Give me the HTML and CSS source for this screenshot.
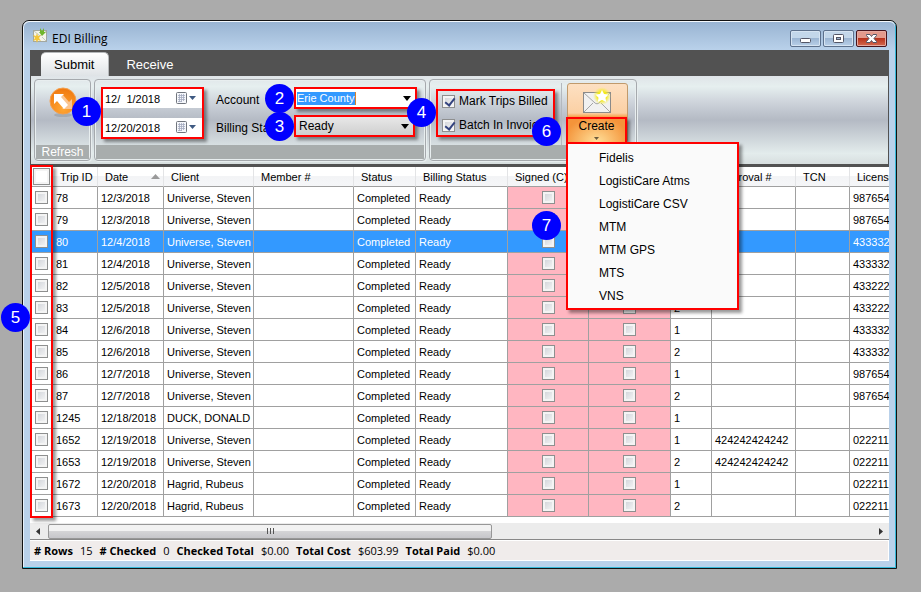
FILE: index.html
```html
<!DOCTYPE html>
<html lang="en">
<head>
    <meta charset="UTF-8">
    <title>EDI Billing</title>
    <link rel="stylesheet" href="styles.css">
</head>
<body>
    <div class="window">
        <div class="titlebar">
            <svg class="app-icon" width="16" height="16" viewBox="0 0 16 16">
                <rect x="1.500" y="2.500" width="13" height="11" fill="#f4f4ea" stroke="#a3a79f"/>
                <path d="M2 3l6 5 6-5M14 13l-4-4" fill="none" stroke="#c5c8c0"/>
                <path d="M8 0l2 3 2-3v4h2l-4 4-3-4h1z" fill="#6fb52c"/>
                <path d="M5 5l1 3 3-1-2 3 2 3-3-1-1 3-1-3-3 1 2-3-2-3 3 1z" fill="#f3c63a"/>
            </svg>
            <span class="title">EDI Billing</span>
            <div class="win-btns">
                <button type="button" aria-label="Minimize">
                    <svg width="29" height="15"><rect x="9.500" y="7.500" width="10" height="4" rx="1" fill="#fff" stroke="#535666"/></svg>
                </button>
                <button type="button" aria-label="Maximize">
                    <svg width="29" height="15"><rect x="9.500" y="3.500" width="10" height="8" rx="1" fill="#fff" stroke="#535666"/><rect x="12.500" y="6.500" width="4" height="2" fill="#9db4cf" stroke="#535666"/></svg>
                </button>
                <button type="button" class="close" aria-label="Close">
                    <svg width="29" height="15"><path d="M9.500 3.500h3.500l1.500 2 1.500-2h3.500v1l-2.500 3 2.500 3v1h-3.500l-1.500-2-1.500 2h-3.500v-1l2.500-3-2.500-3z" fill="#fff" stroke="#535666"/></svg>
                </button>
            </div>
        </div>

        <div class="content">
            <div class="tabs">
                <button type="button" class="tab selected">Submit</button>
                <button type="button" class="tab">Receive</button>
            </div>

            <div class="ribbon">
                <div class="group refresh">
                    <div class="group-body">
                        <button type="button" class="refresh-btn" aria-label="Refresh">
                            <svg width="30" height="32" viewBox="0 0 30 32">
                                <defs>
                                    <radialGradient id="orange" cx="50%" cy="80%" r="80%">
                                        <stop offset="0" stop-color="#ffa733"/>
                                        <stop offset="1" stop-color="#f0780f"/>
                                    </radialGradient>
                                </defs>
                                <ellipse cx="15" cy="28" rx="9" ry="2" fill="#8f959c" opacity=".5"/>
                                <circle cx="15" cy="14" r="13" fill="url(#orange)" stroke="#f5a04c"/>
                                <path d="M24 22v-10l-3 3-6-7-4 3 6 8-3 3z" fill="#fac591"/>
                                <path d="M6 7h10l-3 3 7 8-4 4-7-8-3 3z" fill="#fff"/>
                            </svg>
                        </button>
                    </div>
                    <div class="caption">Refresh</div>
                </div>

                <div class="group filters">
                    <div class="group-body">
                        <div class="mark dates">
                            <div class="date">
                                <input type="text" value="12/  1/2018" aria-label="From date">
                                <svg width="22" height="13" viewBox="0 0 22 13"><rect x=".5" y=".5" width="10" height="11" rx="1" fill="#f5f7fb" stroke="#70757d"/><path d="M2 3.500h7M2 5.500h7M2 7.500h7M2 9.500h4M3.500 2v8M5.500 2v8M7.500 2v7" stroke="#a4abc0" stroke-width=".8"/><path d="M13 4h7l-3.500 4z" fill="#3f5a82"/></svg>
                            </div>
                            <div class="date">
                                <input type="text" value="12/20/2018" aria-label="To date">
                                <svg width="22" height="13" viewBox="0 0 22 13"><rect x=".5" y=".5" width="10" height="11" rx="1" fill="#f5f7fb" stroke="#70757d"/><path d="M2 3.500h7M2 5.500h7M2 7.500h7M2 9.500h4M3.500 2v8M5.500 2v8M7.500 2v7" stroke="#a4abc0" stroke-width=".8"/><path d="M13 4h7l-3.500 4z" fill="#3f5a82"/></svg>
                            </div>
                            <span class="badge b1">1</span>
                        </div>
                        <div class="fields">
                            <label for="account">Account</label>
                            <div class="mark combo account">
                                <input type="text" id="account" value="Erie County">
                                <svg class="arrow" width="8" height="5"><path d="M0 0h8l-4 5z"/></svg>
                                <span class="badge b2">2</span>
                            </div>
                            <label for="status">Billing Status</label>
                            <div class="mark combo status">
                                <select id="status"><option>Ready</option></select>
                                <svg class="arrow" width="8" height="5"><path d="M0 0h8l-4 5z"/></svg>
                                <span class="badge b3">3</span>
                            </div>
                        </div>
                    </div>
                    <div class="caption"></div>
                </div>

                <div class="group actions">
                    <div class="group-body">
                        <div class="mark checks">
                            <label><input type="checkbox" checked>Mark Trips Billed</label>
                            <label><input type="checkbox" checked>Batch In Invoices</label>
                            <span class="badge b4">4</span>
                        </div>
                        <div class="create">
                            <button type="button" class="create-btn">
                                <svg width="34" height="28" viewBox="0 0 34 28">
                                    <defs>
                                        <radialGradient id="glow">
                                            <stop offset=".5" stop-color="#f4ea1c"/>
                                            <stop offset="1" stop-color="#f8f060" stop-opacity="0"/>
                                        </radialGradient>
                                    </defs>
                                    <rect x="3.500" y="5.500" width="27" height="20" fill="#f1f1f1" stroke="#8a8a8a"/>
                                    <path d="M4 6l11 10c1 1 3 1 4 0l11-10M4 25l9-9M30 25l-9-9" fill="none" stroke="#a5a5a5"/>
                                    <circle cx="22" cy="9" r="9" fill="url(#glow)"/>
                                    <path d="M22 3l2 4 4.500.600-3 3.200.700 4.200-4.200-2-4.200 2 .700-4.200-3-3.200 4.500-.600z" fill="#fff"/>
                                </svg>
                                <span class="mark create-label">Create
                                    <svg width="5" height="3"><path d="M0 0h5l-2.500 3z" fill="#6b5a3c"/></svg>
                                </span>
                            </button>
                            <span class="badge b6">6</span>
                            <ul class="mark menu">
                                <li><button type="button">Fidelis</button></li>
                                <li><button type="button">LogistiCare Atms</button></li>
                                <li><button type="button">LogistiCare CSV</button></li>
                                <li><button type="button">MTM</button></li>
                                <li><button type="button">MTM GPS</button></li>
                                <li><button type="button">MTS</button></li>
                                <li><button type="button">VNS</button></li>
                            </ul>
                            <span class="badge b7">7</span>
                        </div>
                    </div>
                    <div class="caption"></div>
                </div>
            </div>

            <div class="grid">
                <div class="grid-view">
                    <table>
                        <colgroup>
                            <col class="w-check"><col class="w-id"><col class="w-date"><col class="w-client">
                            <col class="w-member"><col class="w-status"><col class="w-billing"><col class="w-signed">
                            <col class="w-signed2"><col class="w-leg"><col class="w-approval"><col class="w-tcn"><col>
                        </colgroup>
                        <thead>
                            <tr>
                                <th class="pick"><input type="checkbox" class="all" aria-label="Check all"></th>
                                <th>Trip ID</th>
                                <th><div class="sorted">Date <svg width="9" height="5"><path d="M0 5h9l-4.500-5z" fill="#9a9a9a"/></svg></div></th>
                                <th>Client</th>
                                <th>Member #</th>
                                <th>Status</th>
                                <th>Billing Status</th>
                                <th>Signed (C)</th>
                                <th></th>
                                <th></th>
                                <th>Approval #</th>
                                <th>TCN</th>
                                <th>License</th>
                            </tr>
                        </thead>
                        <tbody id="rows"></tbody>
                    </table>
                </div>
                <div class="mark column-mark"><span class="badge b5">5</span></div>
            </div>

            <div class="scrollbar">
                <svg width="18" height="15"><path d="M10 4v7l-4-3.500z" fill="#333"/></svg>
                <div class="track">
                    <div class="thumb"><svg width="9" height="7"><path d="M1.500 0v6M4.500 0v6M7.500 0v6" stroke="#555"/></svg></div>
                </div>
                <svg width="18" height="15"><path d="M8 4v7l4-3.500z" fill="#333"/></svg>
            </div>
            <div class="statusbar">
                <b># Rows</b><span>15</span>
                <b># Checked</b><span>0</span>
                <b>Checked Total</b><span>$0.00</span>
                <b>Total Cost</b><span>$603.99</span>
                <b>Total Paid</b><span>$0.00</span>
            </div>
        </div>
    </div>
    <script src="script.js"></script>
</body>
</html>
```

FILE: styles.css
```css
*{
    box-sizing: border-box;
    margin: 0;
    padding: 0;
}
body{
    padding: 20px 24px 23px 22px;
    background: #ababab;
    font: 12px "Liberation Sans", Arial, sans-serif;
    color: #000;
}
button,input,select{
    font: inherit;
    color: inherit;
    border: 0;
    background: none;
}
svg{
    display: block;
    flex: none;
}
.window{
    padding: 0 7px 7px;
    border: 1px solid #111;
    border-radius: 7px 7px 0 0;
    background: #b9d1ea;
    box-shadow: inset -1px -1px #35b8d8, inset 1px 1px #e8f1fa;
}
.titlebar{
    display: flex;
    align-items: center;
    height: 29px;
    margin: 0 -6px;
    padding: 0 8px;
    border-top: 1px solid #f4f8fc;
    border-radius: 6px 6px 0 0;
    background: linear-gradient(#99b4d2, #b9d1ea);
}
.title{
    flex: 1;
    padding: 4px 0 0 4px;
    font: 12px "Open Sans", "Noto Sans", sans-serif;
}
.win-btns{
    display: flex;
    gap: 2px;
    padding-top: 5px;
}
.win-btns button{
    width: 31px;
    height: 17px;
    border: 1px solid #5d718c;
    border-radius: 2px;
    background: linear-gradient(#c3d7ea 45%, #9cb6d3 50%, #b9d0e8);
    box-shadow: inset 0 0 0 1px #d6e4f2;
}
.win-btns .close{
    border-color: #47141c;
    background: linear-gradient(#e39a8c 45%, #b8331c 50%, #d46a50);
    box-shadow: inset 0 0 0 1px #e5aaa0;
}
.content{
    background: #fff;
}

/* ribbon */
.tabs{
    display: flex;
    height: 26px;
    padding: 2px 0 0 11px;
    background: #525252;
}
.tab{
    padding: 0 13px;
    font-size: 13px;
    color: #fff;
}
.tab.selected{
    padding-right: 14px;
    margin-right: 4px;
    border: 1px solid #b5b8ba;
    border-width: 1px 1px 0 0;
    border-radius: 5px 5px 0 0;
    background: linear-gradient(#fff, #dfe3e6);
    color: #000;
}
.ribbon{
    display: flex;
    gap: 3px;
    height: 91px;
    padding: 3px 4px 6px;
    border: 1px solid #525252;
    border-bottom-width: 3px;
    border-top: 0;
    background: linear-gradient(#dfe4e8, #e6efef 12%, #d0d6dd 28%, #b4bac4 50%, #e3ecec 88%, #d7dedf);
}
.ribbon .group{
    display: flex;
    flex-direction: column;
    height: 82px;
    padding: 1px;
    border: 1px solid #a5a9ad;
    border-radius: 4px;
    box-shadow: inset 0 0 0 1px #e8eeef, 1px 1px #e8eeef;
}
.group-body{
    display: flex;
    flex: 1;
}
.caption{
    height: 14px;
    line-height: 15px;
    text-align: center;
    color: #fff;
    background: #a8adad;
}
.ribbon .refresh{
    width: 57px;
    margin-left: -1px;
}
.refresh-btn{
    margin: 6px auto 0;
    align-self: flex-start;
}

/* red frames and numbered badges */
.mark{
    position: relative;
    border: 2px solid #f00;
    box-shadow: 3px 3px 3px rgba(0,0,0,.4);
}
.badge{
    position: absolute;
    z-index: 5;
    width: 29px;
    height: 29px;
    border-radius: 50%;
    background: #00f;
    color: #fff;
    font-size: 17px;
    line-height: 29px;
    text-align: center;
}
.b1{ left: -31px; top: 8px; }
.b2{ left: -31px; top: -5px; }
.b3{ left: -31px; top: -5px; }
.b4{ left: -31px; top: 7px; }
.b5{ left: -31px; top: 136px; }
.b6{ left: -30px; top: 34px; }
.b7{ left: -30px; top: 128px; }

.filters .group-body{
    gap: 12px;
    padding: 6px 7px 0 5px;
}
.dates{
    display: flex;
    flex-direction: column;
    gap: 10px;
    width: 103px;
    height: 52px;
}
.date{
    display: flex;
    align-items: center;
    height: 19px;
    padding: 0 4px 0 2px;
    background: #fff;
}
.date input{
    flex: 1;
    min-width: 0;
    font-size: 11px;
    white-space: pre;
}
.fields{
    display: grid;
    grid-template-columns: 78px auto;
    grid-auto-rows: 22px;
    row-gap: 6px;
    align-items: center;
    justify-items: start;
}
.fields label{
    padding-top: 3px;
    white-space: nowrap;
}
.combo{
    display: flex;
    align-items: center;
    justify-content: space-between;
    height: 22px;
    padding: 0 4px 0 1px;
}
.account{
    width: 123px;
    background: #fff;
}
.account input{
    width: 59px;
    height: 13px;
    border-right: 1px solid #d9822b;
    background: #3399ff;
    color: #fff;
    font-size: 11px;
}
.status{
    width: 121px;
    background: linear-gradient(#e8e8e8, #cfcfcf);
}
.status select{
    flex: 1;
    padding-left: 2px;
    appearance: none;
}
.actions .group-body{
    padding: 2px 7px 0 5px;
}
.checks{
    display: flex;
    flex-direction: column;
    justify-content: space-between;
    width: 119px;
    height: 48px;
    margin-top: 6px;
    padding: 3px 0 3px 4px;
}
.checks label{
    display: flex;
    align-items: center;
    gap: 4px;
    white-space: nowrap;
}
input[type=checkbox]{
    display: block;
    appearance: none;
    flex: none;
    width: 13px;
    height: 13px;
    border: 1px solid #8e8f8f;
    background: linear-gradient(135deg, #cdd0d6, #f8f8f8);
    box-shadow: inset 0 0 0 2px #f4f4f4;
}
input[type=checkbox]:checked::before{
    content: "";
    display: block;
    width: 4px;
    height: 8px;
    margin: 0 0 0 4px;
    border: solid #33437f;
    border-width: 0 2px 2px 0;
    transform: rotate(38deg);
}
.create{
    position: relative;
    margin-left: 6px;
    padding-left: 5px;
    border-left: 1px solid #b3b8be;
}
.create-btn{
    display: block;
    width: 61px;
    height: 60px;
    border: 1px solid #c09a6c;
    border-radius: 3px;
    background: linear-gradient(#fde0c2, #fbd0a4 50%, #f7983a 58%, #ffd089);
}
.create-btn > svg{
    margin: 3px 0 2px 12px;
}
.create-label{
    display: block;
    width: 61px;
    height: 27px;
    margin-left: -2px;
    background: radial-gradient(ellipse at 50% 100%, #ffe09a, #f4943a 80%);
}
.create-label svg{
    margin: 4px auto 0;
}
.menu{
    position: absolute;
    z-index: 4;
    left: 4px;
    top: 59px;
    width: 173px;
    padding: 2px 0 1px;
    list-style: none;
    background: #fafafa;
}
.menu button{
    display: block;
    width: 100%;
    height: 23px;
    padding-left: 31px;
    text-align: left;
}

/* trip grid */
.grid{
    position: relative;
}
.grid-view{
    overflow: hidden;
}
table{
    width: 100%;
    min-width: 890px;
    table-layout: fixed;
    border-spacing: 0;
    font-size: 11px;
}
.w-check{ width: 23px; }
.w-id{ width: 45px; }
.w-date{ width: 66px; }
.w-client{ width: 90px; }
.w-member{ width: 100px; }
.w-status{ width: 62px; }
.w-billing{ width: 92px; }
.w-signed{ width: 81px; }
.w-signed2{ width: 82px; }
.w-leg{ width: 41px; }
.w-approval{ width: 84px; }
.w-tcn{ width: 54px; }
th{
    height: 20px;
    padding-left: 7px;
    border-right: 1px solid #e3e4e6;
    border-bottom: 1px solid #a0a0a0;
    background: linear-gradient(#fff 45%, #f3f4f6 50%, #f5f6f8);
    font-weight: normal;
    text-align: left;
    white-space: nowrap;
}
.sorted{
    display: flex;
    align-items: center;
    justify-content: space-between;
    padding-right: 3px;
}
td{
    height: 22px;
    padding-left: 3px;
    border-right: 1px solid #a0a0a0;
    border-bottom: 1px solid #a0a0a0;
    white-space: nowrap;
}
.pick{
    padding-left: 5px;
}
th.pick{
    padding-left: 3px;
}
input.all{
    width: 17px;
    height: 17px;
    background: #fff;
}
.signed{
    padding: 0;
    background: #ffb6c1;
}
.signed input{
    margin: 0 auto;
}
tr.selected td{
    background: #3399ff;
    color: #fff;
}
.column-mark{
    position: absolute;
    left: 0;
    top: -2px;
    bottom: -1px;
    width: 23px;
}

.scrollbar{
    display: flex;
    align-items: center;
    height: 17px;
    margin-top: 6px;
    border-bottom: 1px solid #888;
    background: #ececec;
}
.track{
    flex: 1;
}
.thumb{
    display: flex;
    align-items: center;
    justify-content: center;
    width: 54%;
    height: 15px;
    border: 1px solid #979797;
    border-radius: 2px;
    background: linear-gradient(#f2f2f2 45%, #d4d4d6 50%, #c6c6ca);
}
.statusbar{
    display: flex;
    height: 21px;
    padding-left: 4px;
    border: 1px solid #fff;
    border-left: 0;
    background: #f0eceb;
    font: 11px/19px "Open Sans", "Noto Sans", sans-serif;
    white-space: nowrap;
}
.statusbar b,.statusbar span{
    margin-right: 7px;
}
```

FILE: script.js
```javascript
// id, date, client, leg, approval, license
var trips=[
    ["78","12/3/2018","Universe, Steven","1","","987654"],
    ["79","12/3/2018","Universe, Steven","2","","987654"],
    ["80","12/4/2018","Universe, Steven","1","","433332"],
    ["81","12/4/2018","Universe, Steven","2","","433332"],
    ["82","12/5/2018","Universe, Steven","1","","433222"],
    ["83","12/5/2018","Universe, Steven","2","","433222"],
    ["84","12/6/2018","Universe, Steven","1","","433332"],
    ["85","12/6/2018","Universe, Steven","2","","433332"],
    ["86","12/7/2018","Universe, Steven","1","","987654"],
    ["87","12/7/2018","Universe, Steven","2","","987654"],
    ["1245","12/18/2018","DUCK, DONALD","1","",""],
    ["1652","12/19/2018","Universe, Steven","1","424242424242","022211"],
    ["1653","12/19/2018","Universe, Steven","2","424242424242","022211"],
    ["1672","12/20/2018","Hagrid, Rubeus","1","","022211"],
    ["1673","12/20/2018","Hagrid, Rubeus","2","","022211"]
];
var html="";
for(var i=0;i<trips.length;i++){
    var t=trips[i];
    var signed='<td class="signed"><input type="checkbox" aria-label="Signed '+t[0]+'"></td>';
    html+='<tr'+(t[0]=="80"?' class="selected"':'')+'>'+
        '<td class="pick"><input type="checkbox" aria-label="Trip '+t[0]+'"></td>'+
        '<td>'+t[0]+'</td><td>'+t[1]+'</td><td>'+t[2]+'</td><td></td>'+
        '<td>Completed</td><td>Ready</td>'+signed+signed+
        '<td>'+t[3]+'</td><td>'+t[4]+'</td><td></td><td>'+t[5]+'</td></tr>';
}
document.getElementById("rows").innerHTML=html;
```
